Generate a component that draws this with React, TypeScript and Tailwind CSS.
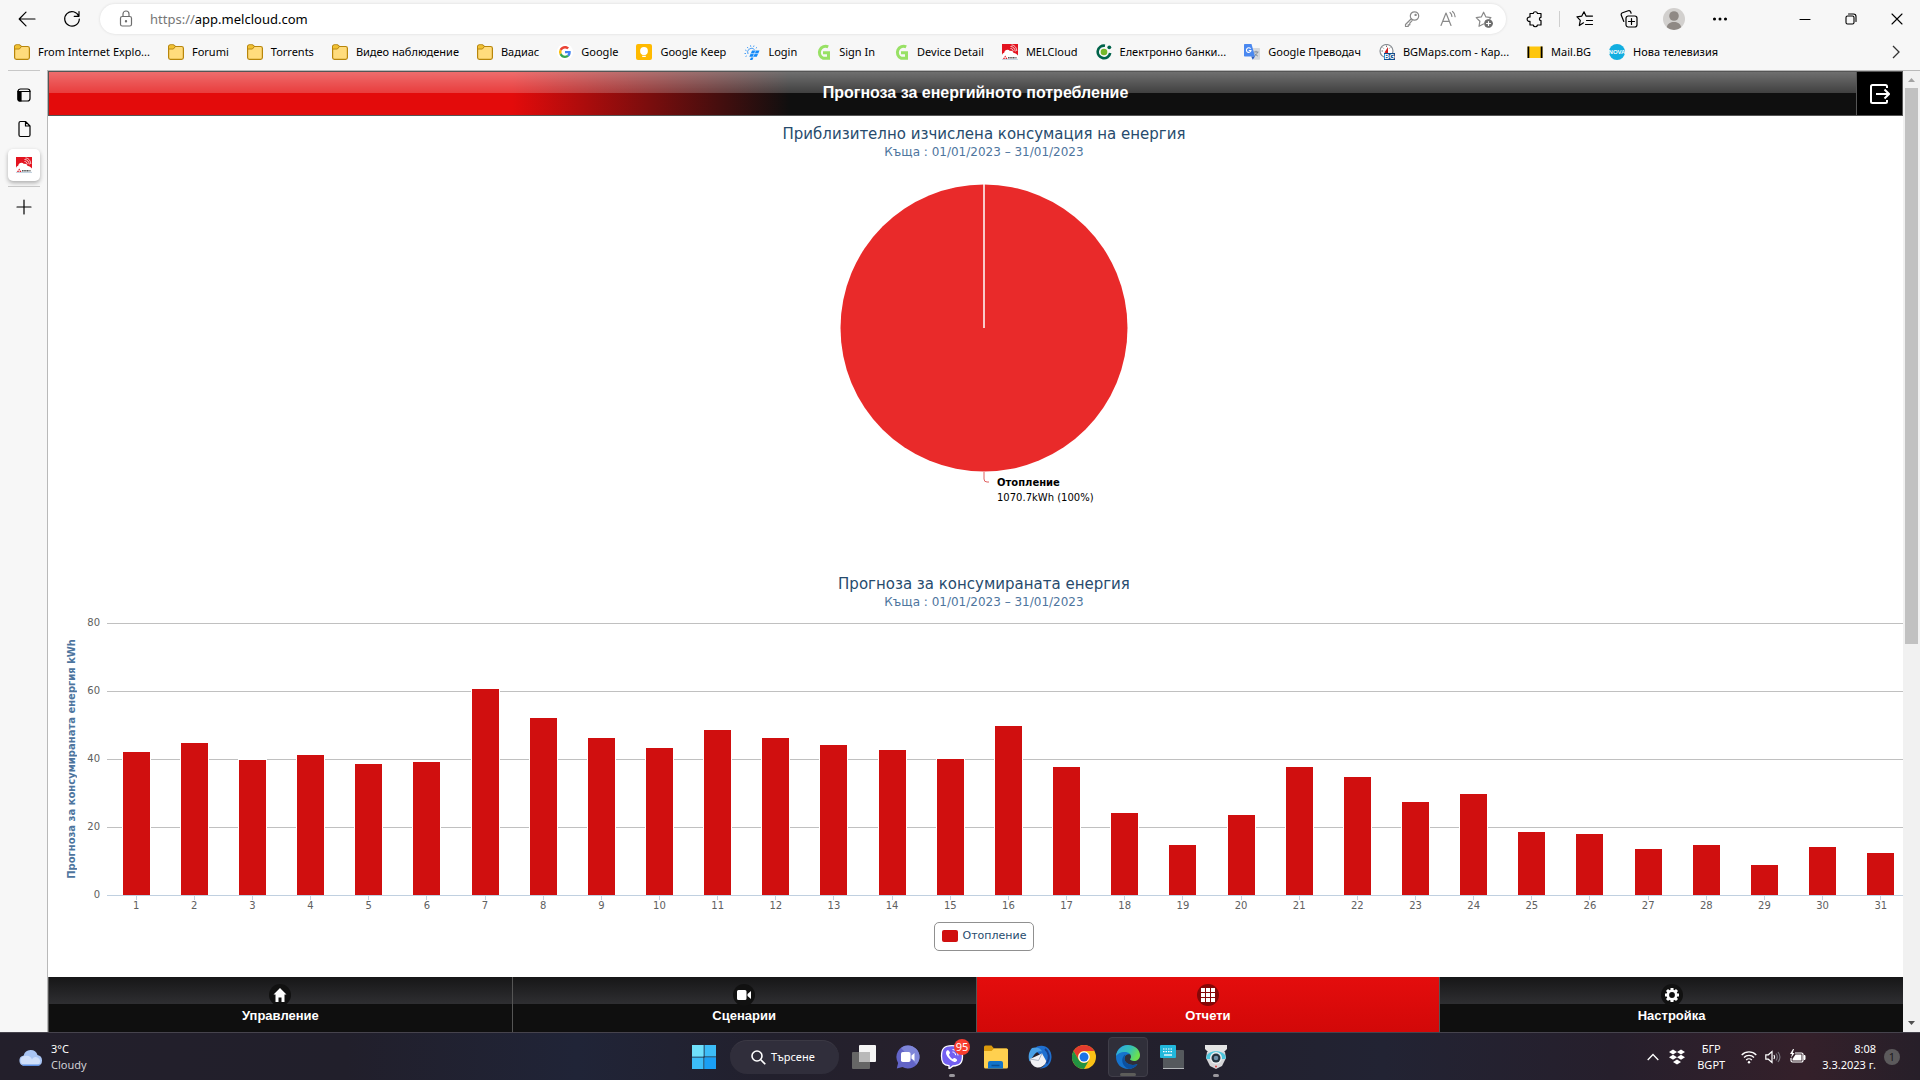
import React from 'react';

type Kids = { children: React.ReactNode };

/* ---------- small drawing helpers ---------- */

function Line({ size = 20, color = 'currentColor', w = 1.2, children }: Kids & { size?: number; color?: string; w?: number }) {
  return (
    <svg width={size} height={size} viewBox="0 0 20 20" fill="none" stroke={color} strokeWidth={w} strokeLinecap="round" strokeLinejoin="round" aria-hidden="true">
      {children}
    </svg>
  );
}

function Folder() {
  return (
    <svg width="16" height="18" viewBox="0 0 16 18" aria-hidden="true">
      <path d="M.6 3.6A1.8 1.8 0 0 1 2.4 1.8h3l2 1.7h6.2a1.8 1.8 0 0 1 1.8 1.8v9.3a1.8 1.8 0 0 1-1.8 1.8H2.4a1.8 1.8 0 0 1-1.8-1.8z" fill="#ffdc7c" stroke="#b8860b" strokeWidth="1.2" />
      <path d="M1.2 5.7V3.6c0-.6.6-1.2 1.2-1.2h2.8l1.6 1.4-1.4 1.9z" fill="#f2c12e" />
      <path d="M.8 6h4.6l2-2.4" fill="none" stroke="#b8860b" />
    </svg>
  );
}

function GoogleG() {
  return (
    <svg width="16" height="16" viewBox="0 0 48 48" aria-hidden="true">
      <circle cx="24" cy="24" r="24" fill="#fff" />
      <g transform="translate(6 6) scale(.75)">
        <path fill="#EA4335" d="M24 9.5c3.5 0 6.7 1.2 9.2 3.6l6.9-6.9C35.9 2.4 30.5 0 24 0 14.6 0 6.5 5.4 2.6 13.2l8 6.2C12.4 13.7 17.7 9.5 24 9.5z" />
        <path fill="#4285F4" d="M47 24.6c0-1.6-.2-3.1-.4-4.6H24v9h12.9c-.6 3-2.2 5.5-4.8 7.2l7.7 6c4.5-4.2 7.2-10.4 7.2-17.6z" />
        <path fill="#FBBC05" d="M10.5 28.6a14.500 14.500 0 0 1 0-9.200l-8-6.200a24 24 0 0 0 0 21.600z" />
        <path fill="#34A853" d="M24 48c6.500 0 11.900-2.100 15.900-5.800l-7.700-6c-2.200 1.500-4.900 2.300-8.200 2.300-6.300 0-11.600-4.200-13.500-9.900l-8 6.200C6.500 42.600 14.600 48 24 48z" />
      </g>
    </svg>
  );
}

function Keep() {
  return (
    <svg width="16" height="16" viewBox="0 0 16 16" aria-hidden="true">
      <rect width="16" height="16" rx="2" fill="#ffba00" />
      <circle cx="8" cy="7" r="3.900" fill="#fff" />
      <path d="M6.200 9h3.600v1.800H6.200zM6.200 11.700h3.600v1.300H6.200z" fill="#fff" />
    </svg>
  );
}

function Solar() {
  return (
    <svg width="16" height="16" viewBox="0 0 16 16" aria-hidden="true">
      <g stroke="#4ba0f5" fill="none" strokeWidth="1">
        <path d="M4 10a4 4 0 0 1 6.500-4.500" />
        <path d="M1.500 12.500l1.300-.6M.5 9.500h1.600M1.200 6l1.500.8M3.200 3l1 1.300M6.500 1.300l.3 1.600M10 1.500l-.5 1.500M13 3.300l-1.200 1" strokeDasharray="1.500 .5" />
      </g>
      <path d="M8 6.500h7.500l-2.700 6.300H5.300z" fill="#1289f8" />
      <path d="M11.700 6.500 9 12.800M6.700 9.600h7.500" stroke="#d8ecff" strokeWidth=".7" />
      <path d="M7 13.500h2.500L8.400 16H5.900z" fill="#1289f8" />
    </svg>
  );
}

function GreenG() {
  return (
    <svg width="16" height="16" viewBox="0 0 16 16" aria-hidden="true">
      <path d="M13.200 2.900A6.200 6.200 0 1 0 8 14.200h5.500V8.800H8" fill="none" stroke="#98e165" strokeWidth="3" />
    </svg>
  );
}

function Mel() {
  return (
    <svg width="16" height="16" viewBox="0 0 16 16" aria-hidden="true">
      <rect width="16" height="16" fill="#e3131f" />
      <path d="M0 16v-4.500C0 9.500 1.500 8.800 2.200 8.700 2.500 6 6 4.800 8 7c1.500-.6 3.300.2 3.500 2 1.800-.2 3 .8 4.500 2.500V16z" fill="#fff" />
      <path d="M8.500 2.500c2.500 0 4.500 1.800 4.800 5M9.500 1c2.800 0 5 2.300 5.300 6M8.500 4.500c1.500 0 2.500 1 2.800 2.600" stroke="#fff" strokeWidth=".8" fill="none" />
      <path d="M0 14.800h16V16H0z" fill="#c3d3e0" />
      <path d="M3.200 11.500l1 1.700h-2zM2 13.300l1 1.700H1zM4.400 13.300l1 1.700h-2z" fill="#e3131f" />
      <path d="M6 13.800h8.500" stroke="#555" strokeWidth="1.600" strokeDasharray="1.200 .4" />
    </svg>
  );
}

function Bank() {
  return (
    <svg width="16" height="16" viewBox="0 0 16 16" aria-hidden="true">
      <path d="M9 1.700A6.300 6.300 0 1 0 14.200 9" fill="none" stroke="#00634a" strokeWidth="2.600" />
      <circle cx="8" cy="8" r="3.300" fill="#76b82a" />
      <circle cx="13.300" cy="3.300" r="1.900" fill="#00634a" />
    </svg>
  );
}

function Translate() {
  return (
    <svg width="16" height="16" viewBox="0 0 16 16" aria-hidden="true">
      <path d="M6 4h9.300a.7.700 0 0 1 .7.700V15a.8.800 0 0 1-.8.800H9.500z" fill="#d5d8dc" />
      <path d="M9.500 8h5M12 6.800V8M13.500 8c-.5 2-2 3.500-3.200 4M10.800 9.500c.8 1.300 1.800 2 3 2.500" stroke="#7a8794" strokeWidth=".9" fill="none" />
      <path d="M.8 0h6.700L11 12.600H.8a.8.800 0 0 1-.8-.8V.8A.8.800 0 0 1 .8 0z" fill="#4a88f0" />
      <path d="M7.200 12.600H11l-2.300 3.200z" fill="#2a5cc0" />
      <path d="M6.600 4.700A2.300 2.300 0 1 0 7 6.500H4.700" stroke="#fff" strokeWidth="1.100" fill="none" />
    </svg>
  );
}

function BgMaps() {
  return (
    <svg width="16" height="16" viewBox="0 0 16 16" aria-hidden="true">
      <circle cx="7.500" cy="7" r="6.500" fill="#fff" stroke="#8a8f94" strokeWidth="1.200" />
      <path d="M7.500 1.500v1.500M2.500 7H4M3.800 3.600l.9.900M11.200 3.600l-.9.900" stroke="#555" strokeWidth=".8" />
      <path d="M9 3v7L5.500 8.500z" fill="#d11a1a" />
      <rect x="5" y="9" width="11" height="7" fill="#0f4f91" />
      <text x="10.500" y="15" textAnchor="middle" fill="#fff" fontSize="7" fontWeight="700" fontFamily="Liberation Sans, sans-serif">BG</text>
    </svg>
  );
}

function MailBg() {
  return (
    <svg width="16" height="16" viewBox="0 0 16 16" aria-hidden="true">
      <rect x=".5" y="2.500" width="15" height="11.500" fill="#fec60d" />
      <path d="M1.400 2.500V14M14.600 2.500V14" stroke="#000" strokeWidth="1.800" />
    </svg>
  );
}

function Nova() {
  return (
    <svg width="16" height="16" viewBox="0 0 16 16" aria-hidden="true">
      <circle cx="8" cy="8" r="8" fill="#12aee0" />
      <text x="8" y="10.300" textAnchor="middle" fill="#fff" fontSize="6" fontWeight="700" fontFamily="Liberation Sans, sans-serif">NOVA</text>
    </svg>
  );
}

/* ---------- browser chrome ---------- */

function BrowserBar() {
  return (
    <header className="flex h-[38px] items-center pr-[13px] text-black">
      <button aria-label="Back" className="ml-[17px]">
        <Line><path d="M18 10H2.500M9 3.200 2.200 10 9 16.800" /></Line>
      </button>
      <button aria-label="Refresh" className="ml-[25px]">
        <Line><path d="M16.800 7.200A7.300 7.300 0 1 0 17.300 10M17 2.500v4.800h-4.800" /></Line>
      </button>
      <div className="ml-[18px] flex h-[30px] flex-1 items-center rounded-full bg-white pr-3 pl-4 text-[#6e6e6e] shadow-[0_0_3px_rgba(0,0,0,0.12)]">
        <Line><rect x="4.500" y="7.500" width="11" height="9.500" rx="1.800" /><path d="M7 7.500V5a3 3 0 0 1 6 0v2.500" /><circle cx="10" cy="12.300" r=".6" fill="#6e6e6e" /></Line>
        <label className="ml-3.5 flex flex-1 text-[13px] leading-5">
          <span className="text-[#767676]">https://</span>
          <input aria-label="Address" defaultValue="app.melcloud.com" className="w-full flex-1 bg-transparent text-black outline-none" />
        </label>
        <div className="flex items-center gap-4 text-[#8a8a8a]">
          <button aria-label="Saved passwords"><Line><circle cx="12.500" cy="7" r="4.200" /><path d="M9.300 9.800 3.500 15.500V17.500h2.700v-1.700h1.600v-1.700l2.300-2.500" /><circle cx="13.600" cy="5.900" r=".6" /></Line></button>
          <button aria-label="Read aloud"><Line><path d="M3 16.500 8 4l5 12.500M4.700 12.300h6.600M12 3.500c1.300 1 1.900 2.300 1.900 4M14.500 2.500c1.800 1.300 2.600 3 2.600 5.200" /></Line></button>
          <button aria-label="Add to favorites"><Line><path d="M9.500 15 5 17.300l.9-5.100L2.200 8.600l5.100-.7L9.600 3.200l2.300 4.700 5 .7-1.200 1.200" /><circle cx="14.500" cy="14.500" r="4" fill="#6e6e6e" stroke="#6e6e6e" strokeWidth=".8" /><path d="M14.500 12.500v4M12.500 14.500h4" stroke="#fff" /></Line></button>
        </div>
      </div>
      <div className="flex items-center pl-[19px]">
        <button aria-label="Extensions"><Line><path d="M6 4.500h2.200a2.200 2.200 0 0 1 4.300 0H16v3.800a1.600 1.600 0 0 0 0 3.200V16h-3.500a2.200 2.200 0 0 1-4.300 0H5v-3.700a2.200 2.200 0 1 1 0-4.200V4.500z" /></Line></button>
        <span className="ml-3.5 h-4 w-px bg-[#cfcfcf]" />
        <button aria-label="Favorites" className="ml-[15px]"><Line><path d="M8.500 13.800 4.300 16.500l1-5.200L2 7.800l4.800-.7L9 2.800l2 4.300h6.500M11.500 11.500h6M10.500 15.500h7" /></Line></button>
        <button aria-label="Collections" className="ml-6"><Line><rect x="7" y="7" width="11" height="11" rx="2.200" /><path d="M12.500 9.500v6M9.500 12.500h6M4.800 12.500 2.300 6.300a2 2 0 0 1 1.200-2.600l5.700-1.900a2 2 0 0 1 2.500 1.200l.4 1.200" /></Line></button>
        <button aria-label="Profile" className="ml-6">
          <svg width="22" height="22" viewBox="0 0 22 22" aria-hidden="true"><circle cx="11" cy="11" r="11" fill="#d2d0ce" /><circle cx="11" cy="8" r="4.800" fill="#8f8985" /><path d="M3.800 19.300C4.500 15.500 7.500 14 11 14s6.500 1.500 7.200 5.300A11 11 0 0 1 11 22a11 11 0 0 1-7.200-2.700z" fill="#8f8985" /></svg>
        </button>
        <button aria-label="Settings and more" className="ml-[25px]"><Line><g fill="currentColor"><circle cx="4.500" cy="10" r=".9" /><circle cx="10" cy="10" r=".9" /><circle cx="15.500" cy="10" r=".9" /></g></Line></button>
        <button aria-label="Minimize" className="ml-[65px]"><Line w={1.100}><path d="M5 10.500h10" /></Line></button>
        <button aria-label="Restore" className="ml-[26px]"><Line w={1.100}><rect x="5" y="7" width="8" height="8" rx="1.500" /><path d="M7.500 5h5A2.500 2.500 0 0 1 15 7.500v5" /></Line></button>
        <button aria-label="Close" className="ml-[26px]"><Line w={1.100}><path d="m5 5 10 10M15 5 5 15" /></Line></button>
      </div>
    </header>
  );
}

const bookmarks: [React.ReactNode, string][] = [
  [<Folder />, 'From Internet Explo...'],
  [<Folder />, 'Forumi'],
  [<Folder />, 'Torrents'],
  [<Folder />, 'Видео наблюдение'],
  [<Folder />, 'Вадиас'],
  [<GoogleG />, 'Google'],
  [<Keep />, 'Google Keep'],
  [<Solar />, 'Login'],
  [<GreenG />, 'Sign In'],
  [<GreenG />, 'Device Detail'],
  [<Mel />, 'MELCloud'],
  [<Bank />, 'Електронно банки...'],
  [<Translate />, 'Google Преводач'],
  [<BgMaps />, 'BGMaps.com - Кар...'],
  [<MailBg />, 'Mail.BG'],
  [<Nova />, 'Нова телевизия'],
];

function Bookmarks() {
  return (
    <nav aria-label="Favorites bar" className="flex h-8 items-center gap-[18px] pr-5 pb-1 pl-3.5 text-[11px] leading-4 text-black">
      {bookmarks.map(([icon, name], i) => (
        <a key={i} href="#" className="flex shrink-0 items-center gap-2 whitespace-nowrap">
          {icon}
          {name}
        </a>
      ))}
      <button aria-label="More favorites" className="ml-auto">
        <svg width="8" height="14" viewBox="0 0 8 14" fill="none" stroke="#333" strokeWidth="1.300" aria-hidden="true"><path d="m1 1 6 6-6 6" /></svg>
      </button>
    </nav>
  );
}

function SideTabs() {
  return (
    <aside className="flex w-[47px] shrink-0 flex-col items-center text-black">
      <span className="h-px w-8 bg-[#c8c8c8]" />
      <button aria-label="Tab actions" className="mt-3.5"><Line><rect x="4" y="4" width="12" height="12" rx="2.500" /><path d="M4 6.500h12" /><path d="M4 6.500h3V16H5.500A1.500 1.500 0 0 1 4 14.800z" fill="#000" /></Line></button>
      <button aria-label="New document tab" className="mt-3.5"><Line><path d="M5 4a1.500 1.500 0 0 1 1.500-1.500h5L16 7v9a1.500 1.500 0 0 1-1.500 1.500h-8A1.500 1.500 0 0 1 5 16zM11.500 2.500V7H16" /></Line></button>
      <button aria-label="MELCloud tab" className="mt-2.5 flex h-8 w-8 items-center justify-center rounded-[5px] bg-white shadow-[0_2px_4px_rgba(0,0,0,0.3)]"><Mel /></button>
      <span className="mt-[5px] h-px w-8 bg-[#c8c8c8]" />
      <button aria-label="New tab" className="mt-2.5"><Line><path d="M10 3v14M3 10h14" /></Line></button>
    </aside>
  );
}

/* ---------- application page ---------- */

function PageHeader() {
  return (
    <div className="flex h-[45px] shrink-0 border border-[#555] bg-[#0f0f0f] bg-[linear-gradient(to_bottom,rgba(255,255,255,0.4),rgba(255,255,255,0.2)_50%,transparent_50%),linear-gradient(to_right,#e30b0b_25%,#0f0f0f_40%)]">
      <h1 className="flex-1 pl-[46px] text-center font-['Liberation_Sans',Arial,sans-serif] text-[16px] leading-[42px] font-bold text-white">
        Прогноза за енергийното потребление
      </h1>
      <button aria-label="Изход" className="flex w-[46px] items-center justify-center border-l border-[#555] bg-black">
        <svg width="20" height="20" viewBox="0 0 20 20" fill="none" stroke="#fff" strokeWidth="2" aria-hidden="true">
          <path d="M17 4V2.500A1.500 1.500 0 0 0 15.500 1h-13A1.500 1.500 0 0 0 1 2.500v15A1.500 1.500 0 0 0 2.500 19h13a1.500 1.500 0 0 0 1.500-1.500V16" />
          <path d="M6 10h12.500M14.500 5.500 19 10l-4.500 4.500" />
        </svg>
      </button>
    </div>
  );
}

function ChartTitle({ children }: Kids) {
  return (
    <div className="pt-2 text-center">
      <h2 className="text-[15px] leading-5 text-[#274b6d]">{children}</h2>
      <p className="text-[12px] leading-4 text-[#4d759e]">Къща : 01/01/2023 – 31/01/2023</p>
    </div>
  );
}

function PieChart() {
  return (
    <section className="pb-[61px]">
      <ChartTitle>Приблизително изчислена консумация на енергия</ChartTitle>
      <svg className="mx-auto mt-6 block" width="400" height="300" viewBox="0 0 400 300" role="img" aria-label="Отопление 1070.7kWh (100%)">
        <circle cx="200" cy="144" r="143.500" fill="#e92a2a" />
        <path d="M200 0v144" stroke="#fff" strokeWidth="1.500" />
        <path d="M200 288v7q0 3 3 3h2" fill="none" stroke="#e06060" />
      </svg>
      <div className="-mt-[9px] text-[10px] leading-[15px] text-black">
        <p className="ml-[50%] pl-[13px] font-bold">Отопление</p>
        <p className="ml-[50%] pl-[13px]">1070.7kWh (100%)</p>
      </div>
    </section>
  );
}

const days = [
  42.4, 45, 40, 41.5, 38.8, 39.4, 60.9, 52.4, 46.5, 43.4, 48.8, 46.5, 44.4, 42.9, 40.3, 50, 37.9, 24.4, 15, 23.8, 37.9, 35, 27.6,
  30, 18.8, 18.2, 13.8, 15, 9.1, 14.4, 12.6,
];
const scale = [80, 60, 40, 20, 0];

function BarChart() {
  return (
    <section>
      <ChartTitle>Прогноза за консумираната енергия</ChartTitle>
      <div className="mt-[13px] flex pr-2.5 pl-3.5">
        <div className="flex h-[272px] w-5 items-center justify-center">
          <p className="rotate-180 text-[10px] leading-5 font-bold whitespace-nowrap text-[#4d759e] [writing-mode:vertical-rl]">
            Прогноза за консумираната енергия kWh
          </p>
        </div>
        <div className="-mt-2 flex h-[288px] w-[18px] flex-col justify-between text-right text-[10px] leading-4 text-[#606060]">
          {scale.map((v) => <span key={v}>{v}</span>)}
        </div>
        <div className="ml-[7px] min-w-0 flex-1">
          <div className="grid h-[273px]">
            <div className="flex flex-col justify-between [grid-area:1/1]">
              {scale.map((v) => <span key={v} className={v ? 'h-px bg-[#c0c0c0]' : 'h-px bg-[#c0d0e0]'} />)}
            </div>
            <div className="flex h-[272px] [grid-area:1/1]">
              {days.map((v, i) => (
                <div key={i} className="flex flex-1 items-end justify-center">
                  <div className="w-[29px] border border-b-0 border-white bg-[#d00f0f]" style={{ height: `${(v / 80) * 100}%` }} />
                </div>
              ))}
            </div>
          </div>
          <div className="flex text-[10px] leading-3 text-[#606060]">
            {days.map((_, i) => (
              <div key={i} className="flex flex-1 flex-col items-center">
                <span className="h-1 w-px bg-[#c0d0e0]" />
                {i + 1}
              </div>
            ))}
          </div>
        </div>
      </div>
      <button className="mx-auto mt-2.5 flex h-[29px] items-center gap-[5px] rounded-[5px] border border-[#909090] px-[7px] pb-0.5 text-[11px] leading-4 text-[#274b6d]">
        <span className="h-3 w-4 rounded-[2px] bg-[#d00f0f]" />
        Отопление
      </button>
    </section>
  );
}

function Home() {
  return <path d="M11 4 4.500 10.500h2V18h3v-4.500h3V18h3v-7.500h2z" fill="#fff" />;
}
function Video() {
  return <path d="M5.500 6h6.500a1.500 1.500 0 0 1 1.500 1.500v7A1.500 1.500 0 0 1 12 16H5.500A1.500 1.500 0 0 1 4 14.500v-7A1.500 1.500 0 0 1 5.500 6zM18 7v8l-3.500-3V10z" fill="#fff" />;
}
function Tiles() {
  return <path d="M4 4h4v4H4zM9 4h4v4H9zM14 4h4v4h-4zM4 9h4v4H4zM9 9h4v4H9zM14 9h4v4h-4zM4 14h4v4H4zM9 14h4v4H9zM14 14h4v4h-4z" fill="#fff" />;
}
function Gear() {
  return (
    <g>
      <path d="M11 4v14M4 11h14M6 6l10 10M16 6 6 16" stroke="#fff" strokeWidth="3" />
      <circle cx="11" cy="11" r="4.200" fill="#111" stroke="#fff" strokeWidth="2.600" />
    </g>
  );
}

const tabs: [string, React.ReactNode][] = [
  ['Управление', <Home />],
  ['Сценарии', <Video />],
  ['Отчети', <Tiles />],
  ['Настройка', <Gear />],
];

function BottomNav() {
  return (
    <nav className="grid h-[55px] shrink-0 grid-cols-4">
      {tabs.map(([name, icon], i) => (
        <a
          key={name}
          href="#"
          aria-current={i === 2 ? 'page' : undefined}
          className={
            i === 2
              ? 'flex flex-col items-center border-l border-[#555] bg-linear-to-b from-[#e40d0d] to-[#d20808] pt-[7px]'
              : 'flex flex-col items-center border-l border-[#555] bg-[linear-gradient(to_bottom,#161617,#2f2f32_50%,#0f0f0f_50%)] pt-[7px]'
          }
        >
          <svg width="22" height="22" viewBox="0 0 22 22" aria-hidden="true">
            <circle cx="11" cy="11" r="11" fill={i === 2 ? '#850707' : '#111'} />
            {icon}
          </svg>
          <span className="font-['Liberation_Sans',Arial,sans-serif] text-[13px] leading-5 font-bold text-white">{name}</span>
        </a>
      ))}
    </nav>
  );
}

function ScrollTrack() {
  return (
    <div className="flex w-[17px] shrink-0 flex-col items-center bg-[#f1f1f1]" aria-hidden="true">
      <svg width="17" height="17" viewBox="0 0 17 17"><path d="M5 11h7L8.500 7z" fill="#a3a3a3" /></svg>
      <div className="flex w-full flex-1 flex-col items-center"><span className="h-[60%] w-[13px] bg-[#c1c1c1]" /></div>
      <svg width="17" height="17" viewBox="0 0 17 17"><path d="M5 6h7l-3.500 4z" fill="#505050" /></svg>
    </div>
  );
}

/* ---------- taskbar ---------- */

function App24({ children }: Kids) {
  return <svg width="24" height="24" viewBox="0 0 24 24" aria-hidden="true">{children}</svg>;
}

const apps: { name: string; icon: React.ReactNode; running?: boolean; active?: boolean; badge?: string }[] = [
  {
    name: 'Task view',
    icon: <App24><rect x="7" y="0" width="17" height="17" rx="1" fill="#f5f5f5" /><rect x="0" y="7" width="18" height="17" rx="1" fill="#666" /><path d="M7 7h11v10H7z" fill="#b9b9b9" /></App24>,
  },
  {
    name: 'Chat',
    icon: <App24><path d="M12 .5a11.500 11.500 0 1 1-5.500 21.600L.8 23.500l1.300-5.600A11.500 11.500 0 0 1 12 .5z" fill="#6264c7" /><path d="M12 .5A11.500 11.500 0 0 1 23.500 12c0 3-1.500 6-3 7.500L5 3C7 1.300 9.500.5 12 .5z" fill="#7f86d8" /><rect x="5" y="7" width="9.500" height="10" rx="1.800" fill="#fff" /><path d="M15.500 10.500 18.500 8v8l-3-2.500z" fill="#fff" /></App24>,
  },
  {
    name: 'Viber',
    running: true,
    badge: '95',
    icon: <App24><path d="M12 .7c8 0 10.500 3 10.500 10.300 0 7-2.700 9.500-9.500 10l-4 3v-3.300C3.500 20 1.500 17.500 1.500 11 1.500 3.700 4 .7 12 .7z" fill="#7360f2" stroke="#fff" strokeWidth="1.300" /><path d="M7 5.500c1-.8 1.700-.3 2.700 1.500.6 1 .2 1.500-.6 2.200-.5.800 2 4.300 3.700 4.700.8-.9 1.400-1.300 2.400-.7 2 1.300 2.300 1.900 1.500 2.900-1.200 1.500-2.500 1.300-5.200-.5-3-2-5.700-5.800-5.500-8.100.1-.8.500-1.600 1-2z" fill="#fff" /><path d="M12.500 4.500c3.500.2 5.500 2.300 5.500 6M12.500 7c2 .2 3 1.300 3.100 3.200" stroke="#fff" fill="none" /></App24>,
  },
  {
    name: 'File Explorer',
    icon: <App24><path d="M0 2a1.500 1.500 0 0 1 1.500-1.500h6L10 3.500h12.500A1.500 1.500 0 0 1 24 5v3H0z" fill="#dc9a0c" /><path d="M0 6h7.500L10 3.500h12.500A1.500 1.500 0 0 1 24 5v17a1.500 1.500 0 0 1-1.500 1.500h-21A1.500 1.500 0 0 1 0 22z" fill="#ffd04f" /><path d="M4 23.500V18a2 2 0 0 1 2-2h11a2 2 0 0 1 2 2v5.500z" fill="#1273c8" /><path d="M7.500 20.500h8" stroke="#0a4f93" strokeWidth="1.500" /></App24>,
  },
  {
    name: 'Thunderbird',
    icon: <App24><path d="M9 1.500C17-1.500 24 4 23.500 12.500 23 20 17.500 24 11.500 23.500c5-1.500 6.500-5 6.500-8L9 7C6.500 7.500 3.500 6.500 3 5c1.500.2 4-1 6-3.500z" fill="#1f6fd0" /><path d="M4 3C.5 7 0 12 1.500 16.500L6 10c2-2.500 5-4.500 8-3.500C13 3 8 1.500 4 3z" fill="#49a0e6" /><path d="M2 14 14 8.500l4.500 8c-2 4.500-6 6.500-9.500 6C5 21.500 2.500 18.500 2 14z" fill="#f1f1f5" /><path d="m2 14 8.500 1.500L14 8.500" fill="none" stroke="#9aa3b5" strokeWidth=".8" /><path d="M17 4c4 3 5.500 9 1.500 14.500" stroke="#15408c" strokeWidth="2" fill="none" /></App24>,
  },
  {
    name: 'Chrome',
    icon: <App24><circle cx="12" cy="12" r="12" fill="#fbc116" /><path d="M12 0A12 12 0 0 1 22.400 6H12a6 6 0 0 0-5.200 9L1.600 6A12 12 0 0 1 12 0z" fill="#e33b2e" /><path d="M1.600 6a12 12 0 0 0 10.400 18l5.200-9A6 6 0 0 1 6.800 15z" fill="#229342" /><circle cx="12" cy="12" r="5.800" fill="#fff" /><circle cx="12" cy="12" r="4.500" fill="#1a73e8" /></App24>,
  },
  {
    name: 'Microsoft Edge',
    running: true,
    active: true,
    icon: (
      <App24>
        <defs>
          <linearGradient id="edgeTop" x1="0" y1="0" x2="1" y2=".4"><stop offset="0" stopColor="#2ea7e8" /><stop offset=".6" stopColor="#35c1b5" /><stop offset="1" stopColor="#6be04f" /></linearGradient>
        </defs>
        <path d="M12 0C5 0 0 5.500 0 12c0 7 5.500 12 12 12 4 0 7.500-1.800 9.500-5C15 21.500 8.500 18.500 8.500 13.500 8.500 10 12 8.500 14 9.500L12 0z" fill="#1673cc" />
        <path d="M0 11.500C.5 4.500 6 0 12 0c7.500 0 12 5.500 12 10 0 4-3 6-6 6-2.500 0-4-1-4-1.700 0-.6 1-1.100 1-2.600C15 9.200 12.500 7 9 7c-4.500 0-8 2-9 4.500z" fill="url(#edgeTop)" />
        <path d="M9.500 9C7 11 5.500 14 6.500 17.500S11 23.700 13 24c3.500-.2 6.700-2 8.500-5C15 21.500 8.500 18.500 8.500 13.500c0-2 .5-3.500 1-4.500z" fill="#0c509f" />
      </App24>
    ),
  },
  {
    name: 'On-screen keyboard',
    icon: <App24><rect x="3" y="5" width="21" height="19" rx="1" fill="#55595d" /><path d="M3 23h21v1H3z" fill="#b4b7ba" /><rect x="0" y="0" width="16" height="13" rx="1" fill="#22b8dc" /><path d="M3 4h10M3 6.700h10" stroke="#fff" strokeWidth="1.200" strokeDasharray="1.500 1" /><path d="M4 10h8" stroke="#fff" strokeWidth="1.300" /></App24>,
  },
  {
    name: 'Camera viewer',
    running: true,
    icon: <App24><path d="M1 0h22v4l-3 3H4L1 4z" fill="#e4e4e4" /><path d="M3 7h18l1 6-4 8-6 3-6-3-4-8z" fill="#d5d5d8" /><path d="M2.500 11C5 4.500 19 4.500 21.500 11v3h-19z" fill="#4cc6dd" /><circle cx="12" cy="13" r="6" fill="#e9eef0" /><circle cx="12" cy="13" r="4.500" fill="#23333f" /><circle cx="12" cy="13" r="2.300" fill="#6d8ea6" /><circle cx="12" cy="21.500" r="1" fill="#d44" /></App24>,
  },
];

function Taskbar() {
  return (
    <footer className="grid h-12 shrink-0 grid-cols-[1fr_auto_1fr] items-center border-t border-[#46434d] bg-[linear-gradient(to_right,#231f2b,#211f2b_18%,#202437_30%,#22202d_40%,#27202b_50%,#22202d_62%,#222333_72%,#261f2c_84%,#34202a_94%,#271f29)] text-[11px] text-white">
      <button className="ml-[19px] flex items-center gap-2 justify-self-start text-left leading-4">
        <svg width="24" height="20" viewBox="0 0 24 20" aria-hidden="true">
          <path d="M5.500 19a5.300 5.300 0 0 1-.8-10.500A7.200 7.200 0 0 1 18.500 8 5.600 5.600 0 0 1 18.500 19z" fill="#a9c5f4" />
          <path d="M6 18a4.500 4.500 0 0 1 0-9 6 6 0 0 1 7 3.500 4 4 0 0 1 5.500-2 4 4 0 0 1 0 7.500z" fill="#cfdffa" />
          <path d="M3 17.500c1 1 2 1.500 2.500 1.500h13c1 0 2-.5 3-1.500z" fill="#5b8de0" />
        </svg>
        <span>3°C<br /><span className="text-[#cfcfd4]">Cloudy</span></span>
      </button>
      <div className="flex items-center pl-2">
        <button aria-label="Start" className="mr-3.5">
          <App24><path d="M0 0h11.500v11.500H0zM12.500 0H24v11.500H12.500zM0 12.500h11.500V24H0zM12.500 12.500H24V24H12.500z" fill="#3cbdf8" /><path d="M0 0h11.500v11.500H0z" fill="#6fe0fb" /><path d="M12.500 12.500H24V24H12.500z" fill="#1a9ff5" /></App24>
        </button>
        <button className="mr-[5px] flex h-[34px] w-[109px] items-center gap-[5px] rounded-full border-t border-[#3b3944] bg-[#302e3b] pl-[21px]">
          <svg width="15" height="15" viewBox="0 0 15 15" fill="none" stroke="#fff" strokeWidth="1.600" aria-hidden="true"><circle cx="6" cy="6" r="5" /><path d="m9.800 9.800 4.500 4.500" /></svg>
          Търсене
        </button>
        <div className="flex gap-1">
          {apps.map((a) => (
            <button
              key={a.name}
              aria-label={a.name}
              className={
                a.active
                  ? 'relative flex h-10 w-10 items-center justify-center rounded-[4px] border border-[#403e49] bg-[#302f3a]'
                  : 'relative flex h-10 w-10 items-center justify-center'
              }
            >
              {a.icon}
              {a.badge && <span className="absolute top-0.5 right-0.5 flex h-4 w-4 items-center justify-center rounded-full bg-[#f93e30] text-[11px] leading-4">{a.badge}</span>}
              {a.running && <span className={a.active ? 'absolute bottom-0 h-[3px] w-4 rounded-full bg-[#5d5d5a]' : 'absolute bottom-0 h-[3px] w-1.5 rounded-full bg-[#9a979d]'} />}
            </button>
          ))}
        </div>
      </div>
      <div className="flex items-center justify-self-end pr-5 leading-4">
        <button aria-label="Show hidden icons"><svg width="12" height="8" viewBox="0 0 12 8" fill="none" stroke="#fff" strokeWidth="1.300" aria-hidden="true"><path d="m.7 7 5.300-5.500L11.300 7" /></svg></button>
        <svg className="ml-2.5" width="16" height="16" viewBox="0 0 16 16" fill="#fff" aria-hidden="true"><path d="m4 .5 4 2.500-4 2.500L0 3zM12 .5l4 2.500-4 2.500L8 3zM4 5.800l4 2.500-4 2.500-4-2.500zM12 5.800l4 2.500-4 2.500-4-2.500zM8 10.500l4 2.400L8 15.500l-4-2.600z" /></svg>
        <button className="ml-3 text-center">БГР<br />BGPT</button>
        <svg className="ml-4" width="16" height="16" viewBox="0 0 16 16" fill="none" stroke="#fff" strokeWidth="1.300" aria-hidden="true"><path d="M.7 6a10.300 10.300 0 0 1 14.600 0M3 8.500a7 7 0 0 1 10 0M5.200 11a4 4 0 0 1 5.600 0" /><circle cx="8" cy="13.300" r="1.200" fill="#fff" stroke="none" /></svg>
        <svg className="ml-2" width="16" height="16" viewBox="0 0 16 16" fill="none" stroke="#fff" strokeWidth="1.200" aria-hidden="true"><path d="M.8 5.800h2.500L7 2.500v11L3.300 10.200H.8z" /><path d="M9 6c.8 1.300.8 2.700 0 4" /><path d="M11 4.500c1.500 2 1.500 5 0 7M13 3c2.300 3 2.300 7 0 10" stroke="#77737c" /></svg>
        <svg className="ml-2" width="17" height="16" viewBox="0 0 17 16" aria-hidden="true"><path d="M6 4h6.500A1.500 1.500 0 0 1 14 5.500v6a1.500 1.500 0 0 1-1.500 1.500h-9A1.500 1.500 0 0 1 2 11.500V9" fill="none" stroke="#fff" strokeWidth="1.200" /><path d="M6.500 5.500h6v6h-9V10z" fill="#fff" /><path d="M15 6.500h1v4h-1z" fill="#fff" stroke="#fff" /><path d="M4 0 1 5h2l-1 4 3.500-5H3.700L5 0z" fill="#fff" /></svg>
        <button className="ml-4 text-right">8:08<br />3.3.2023 г.</button>
        <button aria-label="Notifications" className="ml-2 h-4 w-4 rounded-full bg-[#5c5a5c] text-center text-[11px] leading-4 text-[#1c1a20]">1</button>
      </div>
    </footer>
  );
}

export default function App() {
  return (
    <div className="flex h-screen flex-col overflow-hidden bg-[#f7f7f7] font-['Noto_Sans','Open_Sans',sans-serif]">
      <BrowserBar />
      <Bookmarks />
      <div className="flex min-h-0 flex-1">
        <SideTabs />
        <div className="flex min-w-0 flex-1 border-t border-l border-[#b9b9b9]">
          <div className="flex min-w-0 flex-1 flex-col bg-white">
            <PageHeader />
            <main className="min-h-0 flex-1 overflow-hidden font-['DejaVu_Sans',Verdana,sans-serif]">
              <div className="-mr-[17px]">
                <PieChart />
                <BarChart />
              </div>
            </main>
            <BottomNav />
          </div>
          <ScrollTrack />
        </div>
      </div>
      <Taskbar />
    </div>
  );
}
